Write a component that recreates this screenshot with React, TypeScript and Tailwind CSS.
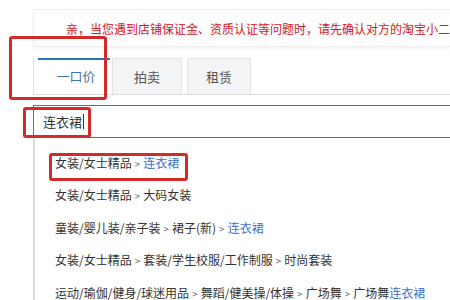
import React from "react";

const items: { parts: string[]; hit?: string }[] = [
  { parts: ["女装/女士精品"], hit: "连衣裙" },
  { parts: ["女装/女士精品", "大码女装"] },
  { parts: ["童装/婴儿装/亲子装", "裙子(新)"], hit: "连衣裙" },
  { parts: ["女装/女士精品", "套装/学生校服/工作制服", "时尚套装"] },
  { parts: ["运动/瑜伽/健身/球迷用品", "舞蹈/健美操/体操", "广场舞", "广场舞"], hit: "连衣裙" },
];

function Sep() {
  return <span className="mx-[3px] text-[10px] text-[#666]">&gt;</span>;
}

export default function App() {
  return (
    <div
      className="relative h-[300px] w-[450px] overflow-hidden bg-white text-[12px] text-[#333]"
      style={{ fontFamily: '"Noto Sans CJK SC", "Noto Sans", sans-serif' }}
    >
      {/* notice bar */}
      <div className="ml-[33px] mt-[9px] h-[38px] whitespace-nowrap border border-r-0 border-[#eeeeee] pl-[32px] leading-[38px] text-[#d0161c] shadow-[0_2px_3px_rgba(0,0,0,0.04)]">
        亲，当您遇到店铺保证金、资质认证等问题时，请先确认对方的淘宝小二
      </div>

      {/* tabs */}
      <div className="ml-[33px] mt-[11px] flex h-[37px] items-stretch border-b border-[#dddddd]">
        <div className="relative flex w-[77px] items-center justify-center border-l border-[#e2e2e2] bg-white pl-[8px] text-[13px] text-[#3f72a6]">
          <div className="absolute left-[4px] right-0 top-0 h-[2px] bg-[#2a72bf]" />
          一口价
        </div>
        <div className="ml-[2px] flex w-[70px] items-center justify-center border border-b-0 border-[#e3e3e3] bg-[#f3f4f6] text-[13px] text-[#555]">
          拍卖
        </div>
        <div className="ml-[5px] flex w-[64px] items-center justify-center border border-b-0 border-[#e3e3e3] bg-[#f3f4f6] text-[13px] text-[#555]">
          租赁
        </div>
      </div>

      {/* search input */}
      <div className="ml-[33px] mt-[10px] flex h-[33px] items-center border-y border-l border-[#3a7ca8] pl-[9px] text-[13px] text-[#333]">
        连衣裙
        <span className="ml-[1px] inline-block h-[15px] w-px bg-[#333]" />
      </div>

      {/* suggestions */}
      <div className="ml-[33px] border-l-2 border-[#dcdcdc] pt-[9px]">
        {items.map((it, i) => (
          <div key={i} className="h-[32.4px] whitespace-nowrap pl-[20px] leading-[32px]">
            {it.parts.map((p, j) => (
              <React.Fragment key={j}>
                {j > 0 && <Sep />}
                {p}
              </React.Fragment>
            ))}
            {it.hit && (
              <>
                {it.parts.length === 4 ? null : <Sep />}
                <span className="text-[#3d6fc7]">{it.hit}</span>
              </>
            )}
          </div>
        ))}
      </div>

      {/* red annotation boxes */}
      <div className="absolute left-[9px] top-[36px] h-[64px] w-[98px] rounded-[3px] border-[3px] border-[#d42a2a]" />
      <div className="absolute left-[23px] top-[107px] h-[31px] w-[68px] rounded-[3px] border-[3px] border-[#d42a2a]" />
      <div className="absolute left-[49px] top-[153px] h-[28px] w-[139px] rounded-[3px] border-[3px] border-[#d42a2a]" />
    </div>
  );
}
